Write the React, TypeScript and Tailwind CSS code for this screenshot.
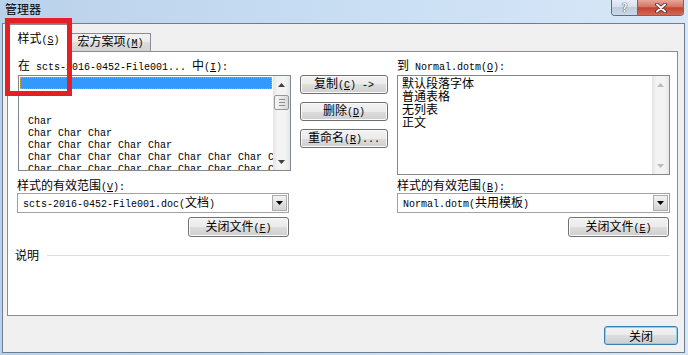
import type { ReactNode } from 'react';

// 管理器 对话框 (Word 组织器) - Win7 Aero 风格

// 宋体里的西文字符是 6px 等宽, 这里用 10px 的 Liberation Mono 代替
function M({ children }: { children: ReactNode }) {
  return <span className="whitespace-pre font-['Liberation_Mono',monospace] text-[10px]">{children}</span>;
}

// 访问键 (S) (M) ...
function Key({ k }: { k: string }) {
  return (
    <M>
      (<u>{k}</u>)
    </M>
  );
}

function WinButton({ children, className = '' }: { children: ReactNode; className?: string }) {
  return (
    <div
      className={`flex items-center justify-center rounded-[3px] border border-[#707070] bg-[linear-gradient(#f2f2f2_0%,#ebebeb_50%,#dddddd_50%,#cfcfcf_100%)] leading-[14px] shadow-[inset_0_0_0_1px_#fbfbfb] ${className}`}
    >
      <span className="whitespace-pre">{children}</span>
    </div>
  );
}

function Arrow({ up, color }: { up?: boolean; color: string }) {
  return (
    <svg width="7" height="4" viewBox="0 0 7 4">
      <path d={up ? 'M0 4h7L3.5 0z' : 'M0 0h7L3.5 4z'} fill={color} />
    </svg>
  );
}

function VScroll({ disabled }: { disabled?: boolean }) {
  const color = disabled ? '#bcbcbc' : '#404040';
  return (
    <div className="flex h-full w-[17px] flex-col bg-[linear-gradient(to_right,#e3e3e3,#f3f3f3_25%,#f3f3f3_75%,#e6e6e6)]">
      <div className="flex h-[17px] items-center justify-center">
        <Arrow up color={color} />
      </div>
      <div className="flex-1">
        {!disabled && (
          <div className="mx-[1px] mt-[2px] flex h-[15px] flex-col items-center justify-center gap-[2px] rounded-[2px] border border-[#979797] bg-[linear-gradient(to_right,#f4f4f4,#e9e9e9_50%,#d7d7d7)]">
            <div className="h-px w-[6px] bg-[#8f8f8f]" />
            <div className="h-px w-[6px] bg-[#8f8f8f]" />
            <div className="h-px w-[6px] bg-[#8f8f8f]" />
          </div>
        )}
      </div>
      <div className="flex h-[17px] items-center justify-center">
        <Arrow color={color} />
      </div>
    </div>
  );
}

function Combo({ children, className = '' }: { children: ReactNode; className?: string }) {
  return (
    <div className={`flex h-[20px] items-center border border-[#a3a3a3] bg-white pl-[5px] ${className}`}>
      <div className="flex-1 whitespace-nowrap leading-[14px]">{children}</div>
      <div className="mr-[1px] flex h-[16px] w-[15px] items-center justify-center border border-[#acacac] bg-[linear-gradient(#f4f4f4,#e2e2e2_50%,#d3d3d3)]">
        <Arrow color="#000" />
      </div>
    </div>
  );
}

const leftRows = [
  'Char',
  'Char Char Char',
  'Char Char Char Char Char',
  'Char Char Char Char Char Char Char Char Char',
  'Char Char Char Char Char Char Char Char Char Char',
];

const rightRows = ['默认段落字体', '普通表格', '无列表', '正文'];

export default function App() {
  return (
    <div className="relative h-[355px] w-[688px] overflow-hidden bg-[linear-gradient(to_right,#b9d1ea,#cadff4_55%,#d8e7f7)] font-['Noto_Sans_CJK_SC',sans-serif] text-[12px] text-black">
      {/* 标题栏 */}
      <div className="flex h-[23px] items-start justify-between">
        <div className="pl-[5px] pt-[2px] leading-[14px]">管理器</div>
        <div className="mr-[4px] flex h-[16px] overflow-hidden rounded-b-[4px] border border-t-0 border-[#5b6c84]">
          <div className="flex w-[26px] items-center justify-center border-r border-[#5b6c84] bg-[linear-gradient(#e7eef8,#d3deec_50%,#bfcde0_50%,#cbd8e9)] text-[11px] font-bold leading-none text-white [text-shadow:0_0_1px_#26364a,0_0_1px_#26364a]">
            ?
          </div>
          <div className="flex w-[45px] items-center justify-center bg-[linear-gradient(#e9a697,#d47564_45%,#c2432f_52%,#d06b54)]">
            <svg width="12" height="10" viewBox="0 0 12 10">
              <path d="M2 1.5l8 7M10 1.5l-8 7" stroke="#47231d" strokeWidth="3.6" strokeLinecap="round" />
              <path d="M2 1.5l8 7M10 1.5l-8 7" stroke="#fff" strokeWidth="2" strokeLinecap="round" />
            </svg>
          </div>
        </div>
      </div>

      {/* 客户区 */}
      <div className="ml-[2px] flex h-[330px] w-[683px] flex-col border border-[#6e7e90] bg-[#f0f0f0] pl-[4px] pr-[6px]">
        {/* 选项卡 */}
        <div className="-ml-[1px] flex h-[27px] items-end">
          <div className="relative z-10 -mb-[1px] flex h-[28px] w-[65px] items-end justify-center border-x border-t border-[#898c95] bg-white pb-[4px] leading-[14px]">
            <span>
              样式<Key k="S" />
            </span>
          </div>
          <div className="flex h-[18px] w-[80px] items-center justify-center border-r border-t border-[#898c95] bg-[linear-gradient(#f2f2f2,#ebebeb_50%,#dddddd_50%,#d2d2d2)] leading-[14px]">
            <span>
              宏方案项<Key k="M" />
            </span>
          </div>
        </div>

        {/* 选项卡内容 */}
        <div className="h-[265px] w-[671px] border border-[#898c95] bg-white pl-[9px] pr-[7px] pt-[6px]">
          <div className="grid grid-cols-[274px_88px_273px] gap-x-[9px]">
            <div className="col-start-1 row-start-1 ml-[1px] h-[17px] whitespace-pre leading-[14px]">
              在<M> scts-2016-0452-File001... </M>中<Key k="I" />
              <M>:</M>
            </div>
            <div className="col-start-3 row-start-1 h-[17px] whitespace-pre leading-[14px]">
              到<M> Normal.dotm</M>
              <Key k="O" />
              <M>:</M>
            </div>

            {/* 左侧样式列表 */}
            <div className="col-start-1 row-start-2 ml-[1px] flex h-[96px] w-[273px] self-start border border-[#828790] bg-white">
              <div className="w-[254px] overflow-hidden pt-[1px] leading-[12px]">
                <div className="mx-[1px] h-[12px] border border-dotted border-[#c9a54e] bg-[#3399ff]" />
                <div className="h-[12px]" />
                <div className="h-[12px]" />
                {leftRows.map((row, i) => (
                  <div key={i} className="h-[12px] whitespace-pre pl-[9px]">
                    <M>{row}</M>
                  </div>
                ))}
              </div>
              <VScroll />
            </div>

            {/* 中间按钮 */}
            <div className="col-start-2 row-start-2 row-span-4 flex flex-col gap-[8px] self-start">
              <WinButton className="h-[19px] w-[88px]">
                复制<Key k="C" />
                <M> -&gt;</M>
              </WinButton>
              <WinButton className="h-[19px] w-[88px]">
                删除<Key k="D" />
              </WinButton>
              <WinButton className="h-[19px] w-[88px]">
                重命名<Key k="R" />
                <M>...</M>
              </WinButton>
            </div>

            {/* 右侧样式列表 */}
            <div className="col-start-3 row-start-2 flex h-[100px] w-[273px] border border-[#828790] bg-white">
              <div className="flex-1 pl-[4px] leading-[13px]">
                {rightRows.map((row) => (
                  <div key={row} className="h-[13px]">
                    {row}
                  </div>
                ))}
              </div>
              <VScroll disabled />
            </div>

            <div className="col-start-1 row-start-3 h-[18px] pt-[3px] leading-[14px]">
              样式的有效范围<Key k="V" />
              <M>:</M>
            </div>
            <div className="col-start-3 row-start-3 h-[18px] pt-[3px] leading-[14px]">
              样式的有效范围<Key k="B" />
              <M>:</M>
            </div>

            <Combo className="col-start-1 row-start-4 w-[272px]">
              <M>scts-2016-0452-File001.doc(</M>文档<M>)</M>
            </Combo>
            <Combo className="col-start-3 row-start-4 w-[273px]">
              <M>Normal.dotm(</M>共用模板<M>)</M>
            </Combo>

            <div className="col-start-1 row-start-5 mt-[4px] flex w-[272px] justify-end">
              <WinButton className="h-[20px] w-[101px]">
                关闭文件<Key k="F" />
              </WinButton>
            </div>
            <div className="col-start-3 row-start-5 mt-[4px] flex w-[272px] justify-end">
              <WinButton className="h-[20px] w-[101px]">
                关闭文件<Key k="E" />
              </WinButton>
            </div>
          </div>

          {/* 说明 分组 */}
          <div className="-ml-[2px] mt-[11px] flex items-center gap-[8px] leading-[14px]">
            <span>说明</span>
            <div className="h-px flex-1 bg-[#d5dfe5]" />
          </div>
        </div>

        {/* 底部按钮 */}
        <div className="mt-[10px] flex justify-end">
          <div className="flex h-[19px] w-[74px] items-center justify-center rounded-[3px] border border-[#3c7fb1] bg-[linear-gradient(#f2f2f2_0%,#ebebeb_50%,#dddddd_50%,#cfcfcf_100%)] leading-[14px] shadow-[inset_0_0_0_1px_#7fd3f8]">
            关闭
          </div>
        </div>
      </div>

      {/* 截图上的红色标注框 */}
      <div className="absolute left-[5px] top-[18px] z-20 h-[78px] w-[67px] border-[5px] border-[#e41f26]" />
    </div>
  );
}
